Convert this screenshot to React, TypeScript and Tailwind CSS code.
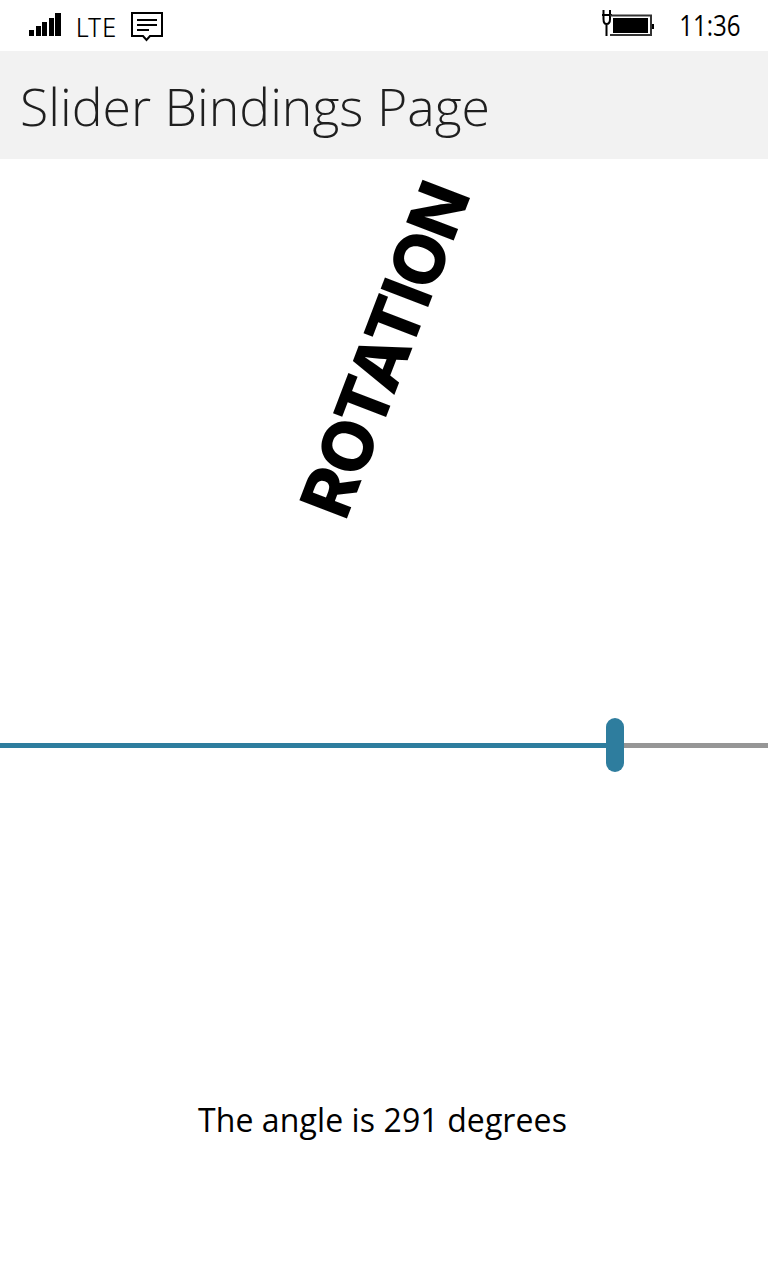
export default function App() {
  return (
    <div className="w-[768px] h-[1280px] bg-white overflow-hidden flex flex-col text-black font-['Open_Sans',sans-serif]">
      <div className="h-[51px] flex items-center relative">
        <svg className="ml-[29px] mt-[-1px]" width="33" height="26" viewBox="0 0 33 26" fill="#000">
          <rect x="0" y="18" width="5" height="6" />
          <rect x="7" y="14" width="5" height="10" />
          <rect x="13" y="10" width="5" height="14" />
          <rect x="20" y="6" width="5" height="18" />
          <rect x="26" y="1" width="6" height="23" />
        </svg>
        <span className="ml-[14px] mt-[6px] text-[25px] leading-none font-['Inter',sans-serif] font-light scale-x-95 origin-left w-[45px]">LTE</span>
        <svg className="ml-[9px] mt-[2px]" width="34" height="32" viewBox="0 0 34 32" fill="none" stroke="#000">
          <path d="M2 2H32V25H20L16.500 29L13 25H2Z" strokeWidth="2" />
          <path d="M7 9H27M7 14H27M7 19H19" strokeWidth="2" />
        </svg>
        <div className="ml-auto flex items-center">
          <svg width="54" height="28" viewBox="0 0 54 28" fill="none" stroke="#000" className="mr-[12px] mt-[-5px]">
            <path d="M2.500 1V10C2.500 13.500 4 15 5.500 15C7.500 15 9 13.500 9 10V1M1 6H11M5.500 15V27" strokeWidth="2" />
            <path d="M9 6.500H50V26H9" strokeWidth="2" stroke="#333" />
            <rect x="12" y="9" width="35" height="15" fill="#000" stroke="none" />
            <rect x="51" y="15" width="2" height="5" fill="#000" stroke="none" />
          </svg>
          <span className="block w-[72px] mr-[29px] mt-[-2px] text-[29px] leading-none font-normal scale-x-[0.83] origin-right whitespace-nowrap text-right">11:36</span>
        </div>
      </div>
      <div className="h-[108px] bg-[#f2f2f2] flex items-center pl-[20px]">
        <h1 className="text-[51.800px] leading-none font-light text-[#1f1f1f] mt-[4px]">Slider Bindings Page</h1>
      </div>
      <div className="h-[378px] flex items-center justify-center">
        <div className="text-[70px] leading-none font-extrabold font-['Inter',sans-serif] tracking-[-1.500px] rotate-[291deg] ml-[2px] mt-[3px]">ROTATION</div>
      </div>
      <div className="h-[416px] flex items-start pt-[206px] relative">
        <div className="h-[5px] w-[615px] bg-[#2e7d9e]" />
        <div className="h-[5px] flex-1 bg-[#969696]" />
        <div className="absolute left-[606px] top-[181px] w-[18px] h-[54px] rounded-[9px] bg-[#2e7d9e]" />
      </div>
      <div className="text-center text-[32px] leading-none mt-[151px] pr-[3px] tracking-[0.1px]">The angle is 291 degrees</div>
    </div>
  );
}
